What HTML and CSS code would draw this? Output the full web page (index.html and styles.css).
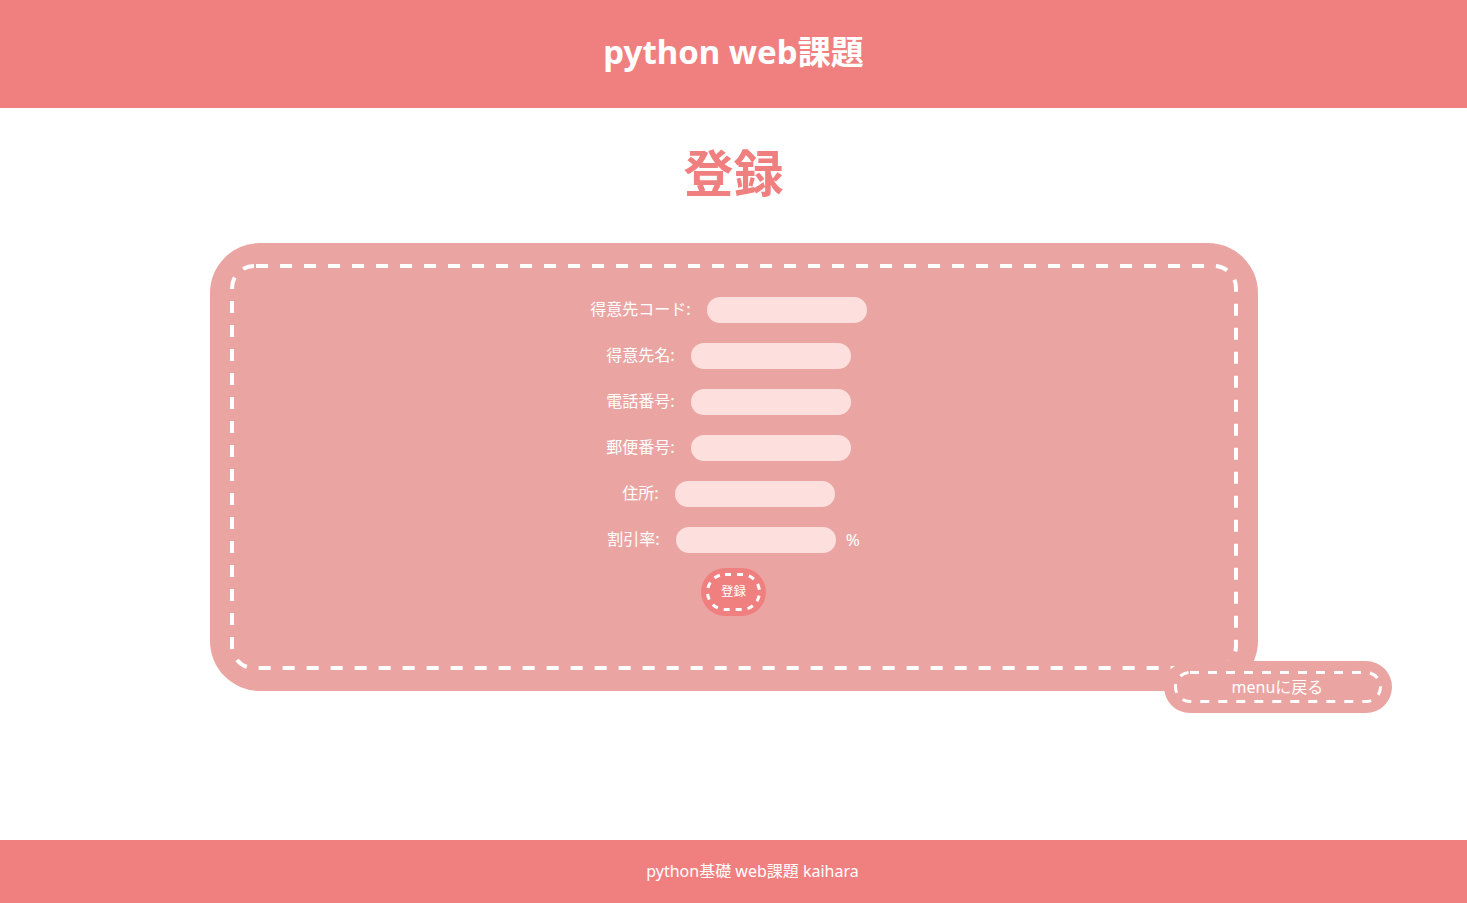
FILE: index.html
```html
<!DOCTYPE html>
<html lang="ja">
<head>
<meta charset="utf-8">
<title>python web課題</title>
<link rel="stylesheet" href="styles.css">
</head>
<body>
<header class="site-header">
  <h1 class="site-title">python web課題</h1>
</header>
<main class="main">
  <h2 class="page-title">登録</h2>
  <div class="box">
    <form class="box-inner">
      <svg class="stitch" width="1008" height="406" aria-hidden="true"><rect x="2" y="2" width="1004" height="402" rx="22" ry="22" fill="none" stroke="#fff" stroke-width="4" stroke-dasharray="12 12" stroke-dashoffset="-2"/></svg>
      <div class="row"><label class="lbl">得意先コード:</label><input class="field" type="text"><span class="tail"></span></div>
      <div class="row"><label class="lbl">得意先名:</label><input class="field" type="text"><span class="tail"></span></div>
      <div class="row"><label class="lbl">電話番号:</label><input class="field" type="text"><span class="tail"></span></div>
      <div class="row"><label class="lbl">郵便番号:</label><input class="field" type="text"><span class="tail"></span></div>
      <div class="row"><label class="lbl">住所:</label><input class="field" type="text"><span class="tail"></span></div>
      <div class="row"><label class="lbl">割引率:</label><input class="field" type="text"><span class="pct">%</span></div>
      <div class="row submit-row">
        <button class="submit" type="button">
          <svg class="stitch" width="55" height="38" aria-hidden="true"><rect x="1.5" y="1.5" width="52" height="35" rx="17.5" ry="17.5" fill="none" stroke="#fff" stroke-width="3" stroke-dasharray="6 6"/></svg>
          <span class="submit-text">登録</span>
        </button>
      </div>
    </form>
  </div>
  <div class="back-row">
    <a class="back" href="#">
      <svg class="stitch" width="228" height="52" aria-hidden="true"><rect x="11.5" y="11.5" width="205" height="29" rx="14.5" ry="14.5" fill="none" stroke="#fff" stroke-width="3" stroke-dasharray="9 9"/></svg>
      <span class="back-text">menuに戻る</span>
    </a>
  </div>
</main>
<footer class="site-footer"><span class="footer-text">python基礎 web課題 kaihara</span></footer>
</body>
</html>
```

FILE: styles.css
```css
* { box-sizing: border-box; }
html, body { margin: 0; padding: 0; }
body {
  font-family: "Noto Sans", "Noto Sans CJK JP", sans-serif;
  color: #fff;
  background: #fff;
  min-height: 100vh;
  display: flex;
  flex-direction: column;
}
.site-header {
  background: #f08080;
  height: 108px;
  display: flex;
  align-items: center;
  justify-content: center;
}
.site-title {
  margin: 0;
  font-size: 33px;
  font-weight: 700;
  line-height: 40px;
  color: #fff;
  padding-bottom: 4px;
}
.main {
  flex: 1;
  display: flex;
  flex-direction: column;
  align-items: center;
}
.page-title {
  margin: 33px 0 0;
  font-size: 50px;
  line-height: 58px;
  font-weight: 700;
  color: #f08080;
  font-family: "Noto Sans CJK JP", sans-serif;
}
.box {
  margin-top: 44px;
  width: 1048px;
  height: 448px;
  background: #eaa5a2;
  border-radius: 50px;
  padding: 21px 20px;
}
.box-inner {
  position: relative;
  height: 100%;
  display: flex;
  flex-direction: column;
  align-items: center;
  padding-top: 33px;
  gap: 20px;
}
.stitch {
  position: absolute;
  left: 0;
  top: 0;
  pointer-events: none;
}
.row {
  display: flex;
  align-items: center;
  justify-content: center;
  height: 26px;
  font-size: 16px;
  line-height: 26px;
}
.lbl {
  font-family: "Noto Sans CJK JP", sans-serif;
  color: #fff;
  font-size: 16px;
  padding-bottom: 4px;
}
.field {
  width: 160px;
  height: 26px;
  margin-left: 16px;
  border: none;
  border-radius: 13px;
  background: #fde0de;
  outline: none;
  padding: 0 10px;
}
.tail { width: 10px; }
.pct { margin-left: 10px; font-size: 17px; }
.submit-row { height: 38px; }
.submit {
  position: relative;
  width: 55px;
  height: 38px;
  background: #f08080;
  border: none;
  border-radius: 19px;
  box-shadow: 0 0 0 5px #f08080;
  color: #fff;
  font-size: 12.5px;
  font-family: "Noto Sans CJK JP", sans-serif;
  padding: 0;
  line-height: 1;
  display: flex;
  align-items: center;
  justify-content: center;
}
.submit-text { position: relative; padding-bottom: 2px; }
.back-row {
  width: 1048px;
  display: flex;
  justify-content: flex-end;
  margin-top: -30px;
}
.back {
  position: relative;
  margin-right: -134px;
  width: 228px;
  height: 52px;
  background: #eaa5a2;
  border-radius: 26px;
  text-decoration: none;
  display: flex;
  align-items: center;
  justify-content: center;
  color: #fff;
  font-size: 16px;
  font-family: "Noto Sans", "Noto Sans CJK JP", sans-serif;
}
.back-text { position: relative; padding-bottom: 2px; }
.site-footer {
  background: #f08080;
  height: 63px;
  display: flex;
  align-items: center;
  justify-content: center;
  padding-left: 38px;
  font-size: 16px;
  color: #fff;
}
.footer-text { padding-bottom: 4px; }
```
